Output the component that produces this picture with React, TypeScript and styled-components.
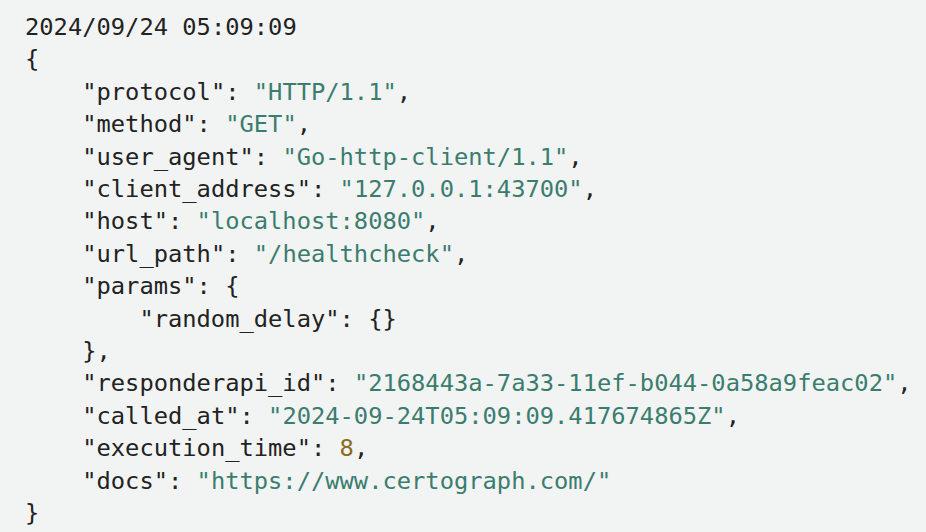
import React from "react";
import styled, { createGlobalStyle } from "styled-components";

const GlobalStyle = createGlobalStyle`
  html, body {
    margin: 0;
    padding: 0;
    background: #f2f3f3;
  }
`;

const LogBlock = styled.pre`
  margin: 0;
  padding: 11px 0 0 25px;
  font-family: "DejaVu Sans Mono", "Liberation Mono", monospace;
  font-size: 23.75px;
  line-height: 32.4px;
  color: #222222;
  background: #f2f3f3;
  white-space: pre;
`;

const Line = styled.div<{ $indent?: number }>`
  padding-left: ${(p) => (p.$indent ?? 0) * 4}ch;
`;

const Str = styled.span`
  color: #3a7d6e;
`;

const Num = styled.span`
  color: #8c6d1f;
`;

type Entry = { key: string; value: string; kind: "str" | "num"; last?: boolean };

const entriesA: Entry[] = [
  { key: "protocol", value: "HTTP/1.1", kind: "str" },
  { key: "method", value: "GET", kind: "str" },
  { key: "user_agent", value: "Go-http-client/1.1", kind: "str" },
  { key: "client_address", value: "127.0.0.1:43700", kind: "str" },
  { key: "host", value: "localhost:8080", kind: "str" },
  { key: "url_path", value: "/healthcheck", kind: "str" },
];

const entriesB: Entry[] = [
  { key: "responderapi_id", value: "2168443a-7a33-11ef-b044-0a58a9feac02", kind: "str" },
  { key: "called_at", value: "2024-09-24T05:09:09.417674865Z", kind: "str" },
  { key: "execution_time", value: "8", kind: "num" },
  { key: "docs", value: "https://www.certograph.com/", kind: "str", last: true },
];

const Row: React.FC<{ e: Entry }> = ({ e }) => (
  <Line $indent={1}>
    {`"${e.key}": `}
    {e.kind === "str" ? <Str>{`"${e.value}"`}</Str> : <Num>{e.value}</Num>}
    {e.last ? "" : ","}
  </Line>
);

export default function App() {
  return (
    <>
      <GlobalStyle />
      <LogBlock>
        <Line>2024/09/24 05:09:09</Line>
        <Line>{"{"}</Line>
        {entriesA.map((e) => (
          <Row key={e.key} e={e} />
        ))}
        <Line $indent={1}>{`"params": {`}</Line>
        <Line $indent={2}>{`"random_delay": {}`}</Line>
        <Line $indent={1}>{"},"}</Line>
        {entriesB.map((e) => (
          <Row key={e.key} e={e} />
        ))}
        <Line>{"}"}</Line>
      </LogBlock>
    </>
  );
}
